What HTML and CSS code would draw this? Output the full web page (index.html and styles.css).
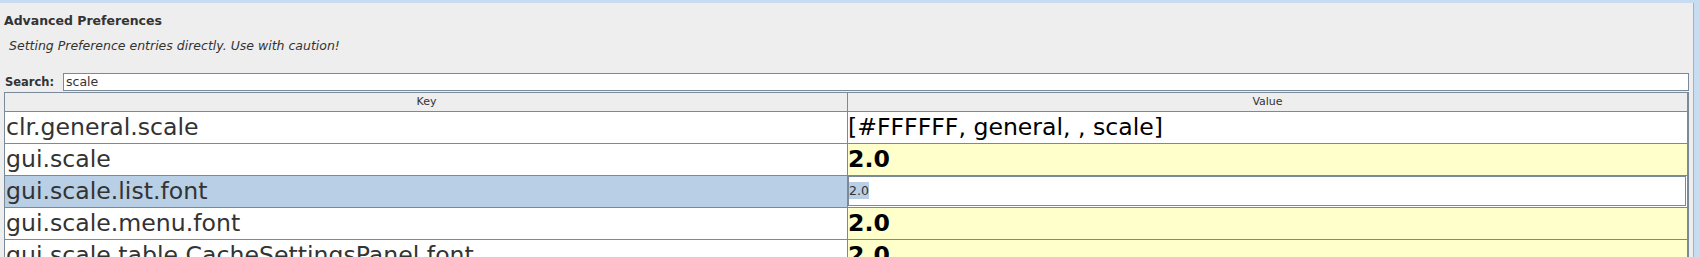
FILE: index.html
```html
<!DOCTYPE html>
<html>
<head>
<meta charset="utf-8">
<title>Advanced Preferences</title>
<link rel="stylesheet" href="styles.css">
</head>
<body>
<div class="window">
  <div class="content">
    <div class="title">Advanced Preferences</div>
    <div class="note">Setting Preference entries directly. Use with caution!</div>
    <div class="search-row">
      <label class="search-label">Search:</label>
      <div class="search-field">scale</div>
    </div>
    <div class="table">
      <div class="row header">
        <div class="cell key">Key</div>
        <div class="cell value">Value</div>
      </div>
      <div class="row">
        <div class="cell key">clr.general.scale</div>
        <div class="cell value">[#FFFFFF, general, , scale]</div>
      </div>
      <div class="row">
        <div class="cell key">gui.scale</div>
        <div class="cell value changed">2.0</div>
      </div>
      <div class="row selected">
        <div class="cell key">gui.scale.list.font</div>
        <div class="cell value editing"><div class="editor"><span class="sel">2.0</span></div></div>
      </div>
      <div class="row">
        <div class="cell key">gui.scale.menu.font</div>
        <div class="cell value changed">2.0</div>
      </div>
      <div class="row">
        <div class="cell key">gui.scale.table.CacheSettingsPanel.font</div>
        <div class="cell value changed">2.0</div>
      </div>
    </div>
  </div>
</div>
</body>
</html>
```

FILE: styles.css
```css
html, body {
  margin: 0;
  padding: 0;
  height: 257px;
  overflow: hidden;
  background: #eeeeee;
  font-family: "DejaVu Sans", sans-serif;
}

.window {
  height: 257px;
  box-sizing: border-box;
  border-top: 3px solid #c8dcf1;
  border-right: 6px solid #c8dcf1;
  display: flex;
}

.content {
  flex: 1;
  box-sizing: border-box;
  border-right: 1px solid #9fb2c7;
  padding: 0 4px 0 4px;
  display: flex;
  flex-direction: column;
  min-width: 0;
}

.title {
  margin-top: 10px;
  font-size: 12.5px;
  line-height: 15px;
  font-weight: bold;
  color: #333333;
}

.note {
  margin-top: 10px;
  padding-left: 5px;
  font-size: 12.5px;
  line-height: 15px;
  font-style: italic;
  color: #333333;
}

.search-row {
  margin-top: 20px;
  display: flex;
  height: 18px;
}

.search-label {
  flex: none;
  width: 59px;
  padding-left: 1px;
  box-sizing: border-box;
  font-size: 11.5px;
  line-height: 18px;
  font-weight: bold;
  color: #333333;
}

.search-field {
  flex: 1;
  box-sizing: border-box;
  background: #ffffff;
  border: 1px solid #7a8a99;
  padding-left: 2px;
  font-size: 12.5px;
  line-height: 16px;
  color: #333333;
}

.table {
  margin-top: 1px;
  border-top: 1px solid #7a8a99;
  border-left: 1px solid #7a8a99;
  border-right: 2px solid #7a8a99;
  display: flex;
  flex-direction: column;
  background: #ffffff;
}

.row {
  display: flex;
  height: 32px;
  box-sizing: border-box;
  border-bottom: 1px solid #7a8a99;
  flex: none;
}

.cell {
  box-sizing: border-box;
  white-space: nowrap;
  overflow: hidden;
  font-size: 23.6px;
  line-height: 31px;
}

.cell.key {
  width: 843px;
  flex: none;
  border-right: 1px solid #7a8a99;
  padding-left: 1px;
  color: #333333;
}

.cell.value {
  flex: 1;
  color: #000000;
}

.row.header {
  height: 19px;
  background: #eeeeee;
}

.row.header .cell {
  font-size: 11px;
  line-height: 18px;
  text-align: center;
  color: #333333;
}

.cell.changed {
  background: #ffffcc;
  font-weight: bold;
}

.row.selected .cell.key {
  background: #b8cfe5;
}

.cell.editing {
  background: #ffffff;
  padding: 0 1px 1px 0;
}

.editor {
  box-sizing: border-box;
  height: 30px;
  border: 1px solid #7a8a99;
  background: #ffffff;
  font-size: 12.5px;
  line-height: 28px;
  color: #333333;
}

.sel {
  background: #b8cfe5;
  padding: 1px 0;
}
```
